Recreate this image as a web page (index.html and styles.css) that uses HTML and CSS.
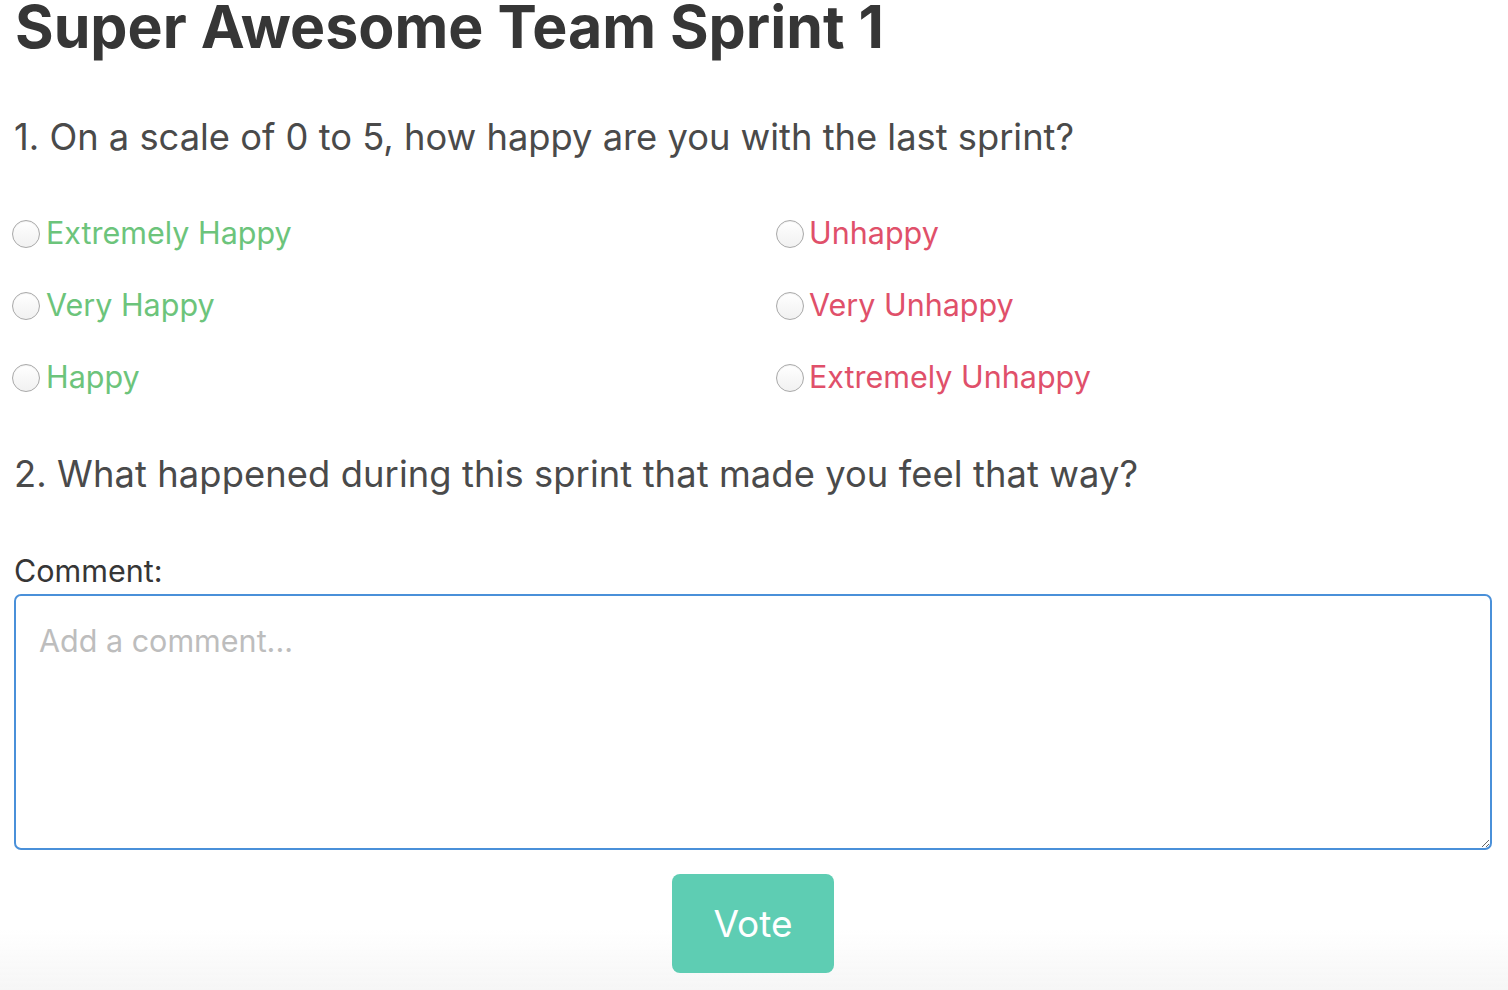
FILE: index.html
```html
<!DOCTYPE html>
<html>
<head>
<meta charset="utf-8">
<link rel="stylesheet" href="styles.css">
</head>
<body>
<main class="page">
  <h1 class="title">Super Awesome Team Sprint 1</h1>
  <h2 class="question q1">1. On a scale of 0 to 5, how happy are you with the last sprint?</h2>
  <div class="options">
    <label class="option happy"><input type="radio" name="mood"><span>Extremely Happy</span></label>
    <label class="option sad"><input type="radio" name="mood"><span>Unhappy</span></label>
    <label class="option happy"><input type="radio" name="mood"><span>Very Happy</span></label>
    <label class="option sad"><input type="radio" name="mood"><span>Very Unhappy</span></label>
    <label class="option happy"><input type="radio" name="mood"><span>Happy</span></label>
    <label class="option sad"><input type="radio" name="mood"><span>Extremely Unhappy</span></label>
  </div>
  <h2 class="question q2">2. What happened during this sprint that made you feel that way?</h2>
  <label class="comment-label" for="comment">Comment:</label>
  <textarea id="comment" class="comment" placeholder="Add a comment..."></textarea>
  <div class="actions">
    <button class="vote">Vote</button>
  </div>
</main>
<div class="fade"></div>
</body>
</html>
```
FILE: styles.css
```css
html, body {
  margin: 0;
  padding: 0;
  background: #ffffff;
}
body {
  font-family: Inter, "Noto Sans", sans-serif;
  color: #363636;
  overflow: hidden;
}
.page {
  padding: 0 16px 0 14px;
  display: flex;
  flex-direction: column;
}
.title {
  margin: -6px 0 0 1px;
  font-size: 59px;
  font-weight: 700;
  line-height: 66px;
  letter-spacing: 0;
  color: #363636;
}
.question {
  margin: 0;
  font-weight: 400;
  font-size: 36.3px;
  line-height: 44px;
  color: #4a4a4a;
  letter-spacing: 0;
}
.q1 { margin-top: 55px; }
.options {
  margin-top: 51px;
  margin-left: -2px;
  display: grid;
  grid-template-columns: 764px 1fr;
  row-gap: 28px;
}
.option {
  display: flex;
  align-items: center;
  height: 44px;
  font-size: 30.5px;
  letter-spacing: 0;
  cursor: pointer;
}
.option input {
  appearance: none;
  -webkit-appearance: none;
  margin: 0 6px 0 0;
  width: 28px;
  height: 28px;
  border-radius: 50%;
  border: 1px solid #a9a9a9;
  background: linear-gradient(#ffffff, #f1f1f1);
  box-shadow: inset 0 1px 1px rgba(0,0,0,0.06);
  position: relative;
  top: 2px;
}
.sad input { margin-right: 5px; }
.happy { color: #6cc47b; }
.sad { color: #e0506a; }
.q2 { margin-top: 54px; letter-spacing: 0.1px; }
.comment-label {
  margin-top: 57px;
  font-size: 30.5px;
  line-height: 36px;
  color: #363636;
}
.comment {
  margin-top: 5px;
  box-sizing: border-box;
  width: 1478px;
  height: 256px;
  border: 2px solid #4a90d9;
  border-radius: 7px;
  padding: 26px 23px;
  font-family: Inter, "Noto Sans", sans-serif;
  font-size: 30.5px;
  color: #363636;
  resize: vertical;
  outline: none;
}
.comment::placeholder {
  color: #bdbdbd;
}
.actions {
  display: flex;
  justify-content: center;
  margin-top: 24px;
  margin-left: 0;
}
.vote {
  width: 162px;
  height: 99px;
  border: none;
  border-radius: 8px;
  background: #5ecdb3;
  color: #ffffff;
  font-family: Inter, "Noto Sans", sans-serif;
  font-size: 37px;
  font-weight: 400;
  cursor: pointer;
  position: relative;
  z-index: 2;
}
.fade {
  position: fixed;
  left: 0;
  right: 0;
  bottom: 0;
  height: 60px;
  background: linear-gradient(rgba(245,245,245,0), rgba(245,245,245,0.9));
  pointer-events: none;
  z-index: 1;
}
```
